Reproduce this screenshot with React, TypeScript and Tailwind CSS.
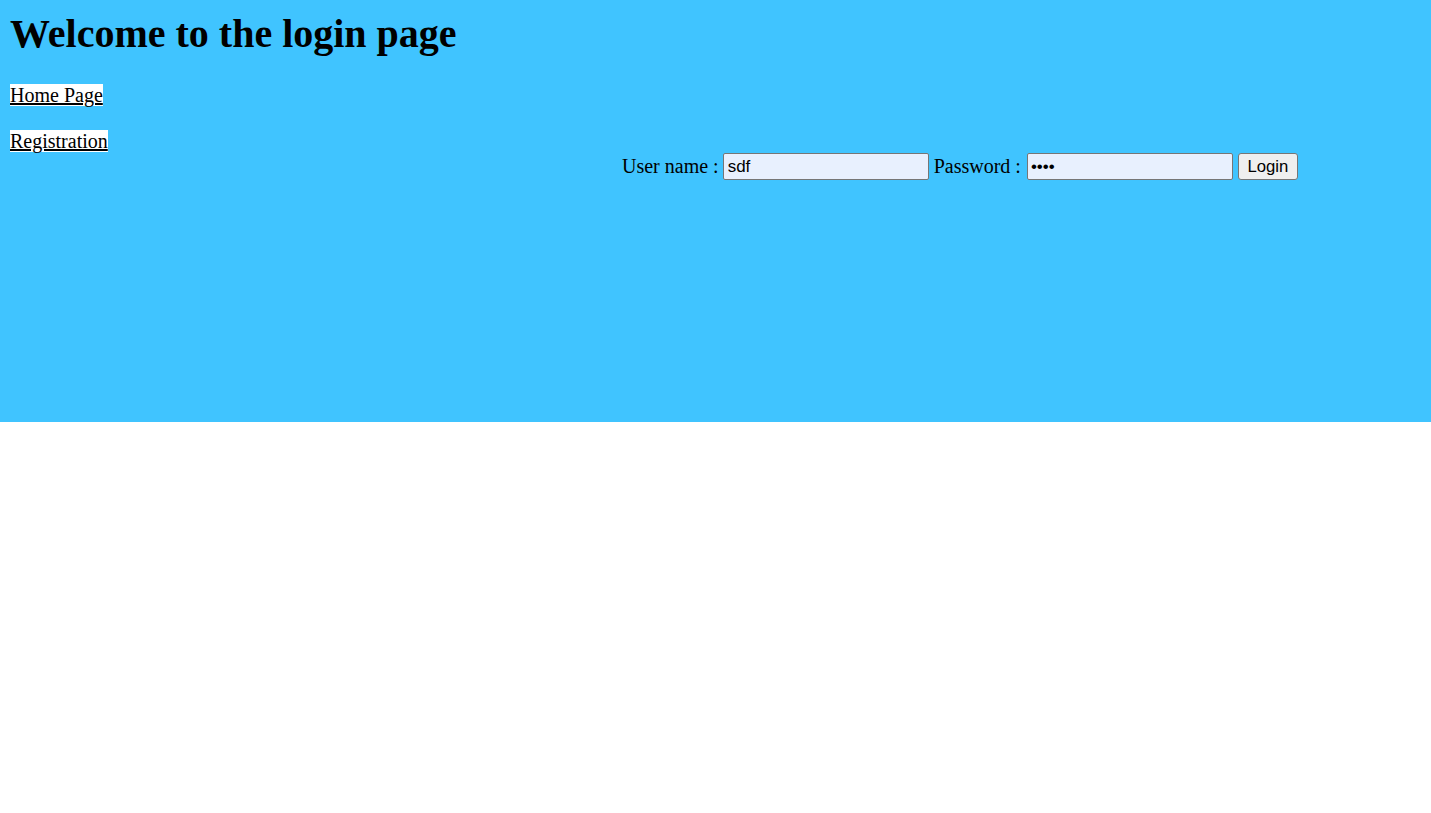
import React, { useState } from 'react';

const serif = "font-['Liberation_Serif','Times_New_Roman',serif]";
const sans = "font-['Liberation_Sans',Arial,sans-serif]";

const App: React.FC = () => {
  const [username, setUsername] = useState('sdf');
  const [password, setPassword] = useState('asdf');

  return (
    <div className={`min-h-screen bg-white ${serif}`}>
      {/* Login header area */}
      <div className="h-[422px] bg-[#40c4ff] px-[10px] pt-[11px] text-black">
        <h1 className="m-0 text-[40px] leading-[46px] font-bold">Welcome to the login page</h1>

        <div className="mt-[27px] text-[20px] leading-[23px]">
          <a href="#" className="bg-white text-black underline">Home Page</a>
        </div>
        <div className="mt-[23px] text-[20px] leading-[23px]">
          <a href="#" className="bg-white text-black underline">Registration</a>
        </div>

        <form
          className="ml-[612px] flex items-center gap-[5px] text-[20px] leading-[23px]"
          onSubmit={e => e.preventDefault()}
        >
          <label htmlFor="username" className="mr-[-1px]">User name :</label>
          <input
            id="username"
            type="text"
            value={username}
            onChange={e => setUsername(e.target.value)}
            className={`h-[27px] w-[206px] rounded-[2px] border border-[#767676] bg-[#e8f0fe] px-[4px] text-[17px] text-black outline-none ${sans}`}
          />
          <label htmlFor="password">Password :</label>
          <input
            id="password"
            type="password"
            value={password}
            onChange={e => setPassword(e.target.value)}
            className={`ml-[1px] h-[27px] w-[206px] rounded-[2px] border border-[#767676] bg-[#e8f0fe] px-[3px] text-[17px] text-black outline-none ${sans}`}
          />
          <button
            type="submit"
            className={`h-[27px] w-[60px] rounded-[3px] border border-[#767676] bg-[#efefef] text-[16.7px] text-black ${sans}`}
          >
            Login
          </button>
        </form>
      </div>
    </div>
  );
};

export default App;
